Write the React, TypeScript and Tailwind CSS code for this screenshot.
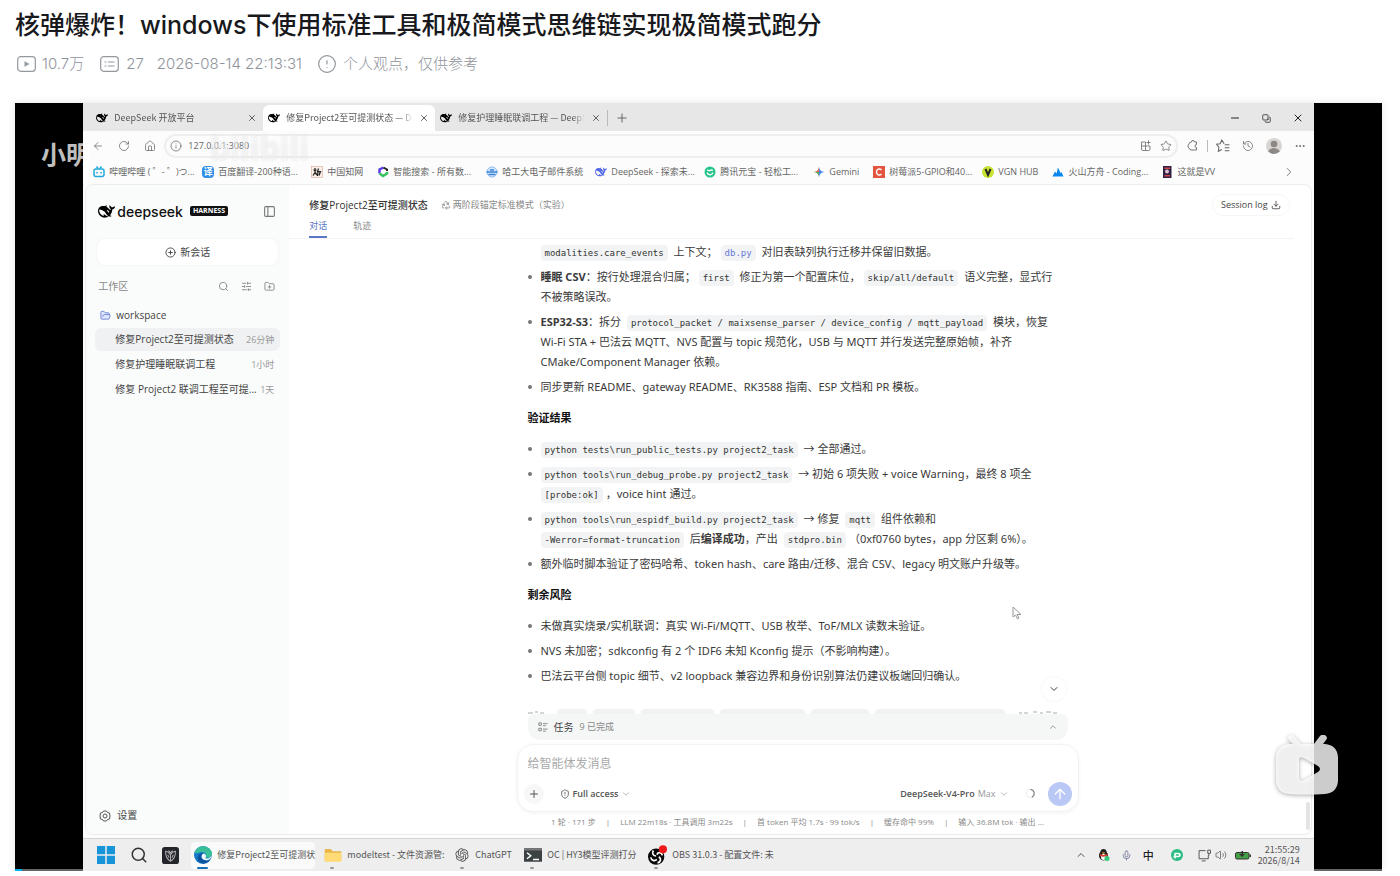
import type { ReactNode } from "react";
import {
  ArrowLeft, ArrowUp, ChevronDown, ChevronRight, ChevronUp, CircleAlert, CirclePlus, Copy, Download, Ellipsis,
  FolderOpen, FolderPlus, History, House, Info, Mic, Minus, PanelLeft, Plus, Recycle,
  RotateCw, Search, ShieldAlert, SlidersHorizontal, Star, Volume2, X,
} from "lucide-react";
import { RiOpenaiFill } from "react-icons/ri";

const Whale = ({ className }: { className: string }) => (
  <svg viewBox="0 0 24 24" fill="currentColor" className={className} aria-hidden="true">
    <path d="M23.748 4.482c-.254-.124-.364.113-.512.234-.051.039-.094.09-.137.136-.372.397-.806.657-1.373.626-.829-.046-1.537.214-2.163.848-.133-.782-.575-1.248-1.247-1.548-.352-.156-.708-.311-.955-.65-.172-.241-.219-.51-.305-.774-.055-.16-.11-.323-.293-.35-.2-.031-.278.136-.356.276-.313.572-.434 1.202-.422 1.84.027 1.436.633 2.58 1.838 3.393.137.093.172.187.129.323-.082.28-.18.552-.266.833-.055.179-.137.217-.329.14a5.526 5.526 0 01-1.736-1.18c-.857-.828-1.631-1.742-2.597-2.458a11.365 11.365 0 00-.689-.471c-.985-.957.13-1.743.388-1.836.27-.098.093-.432-.779-.428-.872.004-1.67.295-2.687.684a3.055 3.055 0 01-.465.137 9.597 9.597 0 00-2.883-.102c-1.885.21-3.39 1.102-4.497 2.623C.082 8.606-.231 10.684.152 12.85c.403 2.284 1.569 4.175 3.36 5.653 1.858 1.533 3.997 2.284 6.438 2.14 1.482-.085 3.133-.284 4.994-1.86.47.234.962.327 1.78.397.63.059 1.236-.03 1.705-.128.735-.156.684-.837.419-.961-2.155-1.004-1.682-.595-2.113-.926 1.096-1.296 2.746-2.642 3.392-7.003.05-.347.007-.565 0-.845-.004-.17.035-.237.23-.256a4.173 4.173 0 001.545-.475c1.396-.763 1.96-2.015 2.093-3.517.02-.23-.004-.467-.247-.588zM11.581 18c-2.089-1.642-3.102-2.183-3.52-2.16-.392.024-.321.471-.235.763.09.288.207.486.371.739.114.167.192.416-.113.603-.673.416-1.842-.14-1.897-.167-1.361-.802-2.5-1.86-3.301-3.307-.774-1.393-1.224-2.887-1.298-4.482-.02-.386.093-.522.477-.592a4.696 4.696 0 011.529-.039c2.132.312 3.946 1.265 5.468 2.774.868.86 1.525 1.887 2.202 2.891.72 1.066 1.494 2.082 2.48 2.914.348.292.625.514.891.677-.802.09-2.14.11-3.054-.614zm1-6.44a.306.306 0 01.415-.287.302.302 0 01.2.288.306.306 0 01-.31.307.303.303 0 01-.304-.308zm3.11 1.596c-.2.081-.399.151-.59.16a1.245 1.245 0 01-.798-.254c-.274-.23-.47-.358-.552-.758a1.73 1.73 0 01.016-.588c.07-.327-.008-.537-.239-.727-.187-.156-.426-.199-.688-.199a.559.559 0 01-.254-.078c-.11-.054-.2-.19-.114-.358.028-.054.16-.186.192-.21.356-.202.767-.136 1.146.016.352.144.618.408 1.001.782.391.451.462.576.685.914.176.265.336.537.445.848.067.195-.019.354-.25.452z" />
  </svg>
);

const Svg = ({ children, className = "size-3", box = "0 0 24 24" }: { children: ReactNode; className?: string; box?: string }) => (
  <svg viewBox={box} fill="none" className={`shrink-0 ${className}`} aria-hidden="true">{children}</svg>
);

const bookmarks: { label: string; wide?: boolean; icon: ReactNode }[] = [
  { label: "哔哩哔哩 ( ゜- ゜)つ...", wide: true, icon: <Svg><rect x="2" y="6" width="20" height="15" rx="4" stroke="#22a9dc" strokeWidth="3" /><path d="m7 1 3 4m7-4-3 4M8 12v3m8-3v3" stroke="#22a9dc" strokeWidth="3" /></Svg> },
  { label: "百度翻译-200种语...", wide: true, icon: <span className="flex size-3 shrink-0 items-center justify-center rounded-sm bg-[#2d8fe6] text-[9px] font-bold text-white">译</span> },
  { label: "中国知网", icon: <Svg><rect x="1" y="1" width="22" height="22" fill="#fbeee7" stroke="#cf9a83" /><path d="M5 8h6M8 4v9l-4 6m4-6 4 5m3-13-2 6h6l-3 8m-2-8-1 9" stroke="#222" strokeWidth="2.500" /></Svg> },
  { label: "智能搜索 - 所有数...", wide: true, icon: <Svg><path d="M13 3 5 7v8" stroke="#5b3df0" strokeWidth="5" /><path d="m13 3 7 4v3" stroke="#222" strokeWidth="4" /><path d="m5 15 7 5 8-5v-3" stroke="#39c262" strokeWidth="5" /></Svg> },
  { label: "哈工大电子邮件系统", wide: true, icon: <Svg><circle cx="12" cy="12" r="10" fill="#d6e8fb" stroke="#8dbbee" strokeWidth="2" /><path d="M1 12h22M5 17h14M8 8h8" stroke="#3f83d8" strokeWidth="3" /></Svg> },
  { label: "DeepSeek - 探索未...", wide: true, icon: <Whale className="size-3 shrink-0 text-[#5468e8]" /> },
  { label: "腾讯元宝 - 轻松工...", wide: true, icon: <Svg><circle cx="12" cy="12" r="11" fill="#24c489" /><path d="M6 9c3-2 4 2 6 0s4-1 6 0M6 13c2 6 10 6 12 0" stroke="#fff" strokeWidth="2.5" /></Svg> },
  { label: "Gemini", icon: <Svg><path d="M12 1c1 7 4 10 11 11-7 1-10 4-11 11Z" fill="#4285e8" /><path d="M12 1C11 8 8 11 1 12h11Z" fill="#e66c50" /><path d="M1 12c7 1 10 4 11 11V12Z" fill="#5aaa65" /></Svg> },
  { label: "树莓派5-GPIO和40...", wide: true, icon: <Svg><path fill="#e3553f" d="M0 0h24v24H0z" /><path d="M17 8c-4-4-10-2-10 4s6 8 10 4" stroke="#fff" strokeWidth="3" /></Svg> },
  { label: "VGN HUB", icon: <Svg><circle cx="12" cy="12" r="12" fill="#c8e332" /><path d="m7 6 5 12 5-12" stroke="#222" strokeWidth="4" /></Svg> },
  { label: "火山方舟 - Coding...", wide: true, icon: <Svg><path d="m1 21 5-10 3 4 3-12 5 11 2-2 4 9Z" fill="#0a88ef" /></Svg> },
  { label: "这就是VV", icon: <Svg><path fill="#302043" d="M4 0h17v24H4z" /><path fill="#d1474e" d="M7 3h11v3H7zM7 18h11v3H7z" /><circle cx="12" cy="11" r="4" fill="#dfc1cc" /></Svg> },
];

const Tab = ({ title, active }: { title: string; active?: boolean }) => (
  <div className={`flex h-full w-[172px] items-center gap-[6px] rounded-t-md pr-[6px] pl-[5px] ${active ? "bg-white" : ""}`}>
    <Whale className="size-3 shrink-0 text-black" />
    <span className="min-w-0 flex-1 overflow-hidden mask-r-from-90% font-['Noto_Sans_CJK_SC',sans-serif] text-[9px] whitespace-nowrap text-[#555]">{title}</span>
    <button aria-label="关闭标签页"><X className="size-[10px] text-[#444]" strokeWidth={2} /></button>
  </div>
);

const Code = ({ children, link }: { children: string; link?: boolean }) => (
  <code className={`mx-[3px] inline-block rounded bg-[#f2f3f4] px-1 font-['DejaVu_Sans_Mono','Liberation_Mono',monospace] text-[9px] leading-4 first:ml-0 ${link ? "text-[#6478d8]" : "text-[#333]"}`}>{children}</code>
);

const Item = ({ children, plain }: { children: ReactNode; plain?: boolean }) => (
  <li className="flex items-start gap-2">
    <span className="flex h-5 w-[5px] shrink-0 items-center justify-center">
      {!plain && <span className="size-1 rounded-full bg-[#777]" />}
    </span>
    <div>{children}</div>
  </li>
);

const Line = ({ children }: { children: ReactNode }) => <p className="h-5 whitespace-nowrap">{children}</p>;
const Heading = ({ children }: { children: string }) => <h3 className="my-[11px] font-bold text-[#111]">{children}</h3>;

const sessions = [
  { title: "修复Project2至可提测状态", time: "26分钟", active: true },
  { title: "修复护理睡眠联调工程", time: "1小时" },
  { title: "修复 Project2 联调工程至可提...", time: "1天" },
];

function Sidebar() {
  return (
    <aside className="flex w-[203px] shrink-0 flex-col bg-[#fafbfb] px-[9px] text-[10px] text-[#444]">
      <div className="mt-[17px] flex h-[18px] items-center pl-[3px]">
        <Whale className="size-[17px] text-black" />
        <span className="ml-[2px] font-['Inter',sans-serif] text-[14px] font-medium text-[#111]">deepseek</span>
        <span className="ml-[7px] rounded-xs bg-[#111] px-[3px] text-[7px] leading-[10px] font-bold text-white">HARNESS</span>
        <button aria-label="收起侧栏" className="mr-1 ml-auto"><PanelLeft className="size-[13px] text-[#777]" /></button>
      </div>
      <button className="mx-[2px] mt-[19px] flex h-[26px] items-center justify-center gap-1 rounded-lg bg-white shadow-[0_0_2px_#e8e8e8]">
        <CirclePlus className="size-[11px]" />新会话
      </button>
      <div className="mt-[11px] flex h-5 items-center gap-3 px-[3px] text-[#888]">
        <span className="mr-auto">工作区</span>
        <button aria-label="搜索"><Search className="size-[11px]" /></button>
        <button aria-label="筛选"><SlidersHorizontal className="size-[11px]" /></button>
        <button aria-label="新建文件夹" className="mr-[2px]"><FolderPlus className="size-[11px]" /></button>
      </div>
      <div className="mt-[7px] flex h-6 items-center gap-[5px] px-[5px]">
        <FolderOpen className="size-[11px] fill-[#dfe7ff] text-[#6c82d2]" />workspace
      </div>
      <ul className="mt-[1px] flex flex-col gap-[2px]">
        {sessions.map((s) => (
          <li key={s.title} className={`flex h-[23px] items-center justify-between rounded-md pr-[6px] pl-5 whitespace-nowrap ${s.active ? "bg-[#eff1f2]" : ""}`}>
            <span>{s.title}</span>
            <span className="text-[9px] text-[#999]">{s.time}</span>
          </li>
        ))}
      </ul>
      <button className="mt-auto mb-[11px] flex items-center gap-[6px] px-1">
        <Svg className="size-3"><path d="m9 2 6 0 2 3 4 1 1 6-1 6-4 1-2 3H9l-2-3-4-1-1-6 1-6 4-1Z" stroke="#555" strokeWidth="2" /><circle cx="12" cy="12" r="4" stroke="#555" strokeWidth="2" /></Svg>
        设置
      </button>
    </aside>
  );
}

function Messages() {
  return (
    <div className="mx-auto w-[540px] pt-[3px] font-['Noto_Sans','Noto_Sans_CJK_SC',sans-serif] text-[11px] leading-5 text-[#3a3a3a]">
      <ul className="flex flex-col gap-[5px]">
        <Item plain>
          <Line><Code>modalities.care_events</Code> 上下文；<Code link>db.py</Code> 对旧表缺列执行迁移并保留旧数据。</Line>
        </Item>
        <Item>
          <Line><b>睡眠 CSV</b>：按行处理混合归属；<Code>first</Code> 修正为第一个配置床位，<Code>skip/all/default</Code> 语义完整，显式行</Line>
          <Line>不被策略误改。</Line>
        </Item>
        <Item>
          <Line><b>ESP32-S3</b>：拆分 <Code>protocol_packet / maixsense_parser / device_config / mqtt_payload</Code> 模块，恢复</Line>
          <Line>Wi-Fi STA + 巴法云 MQTT、NVS 配置与 topic 规范化，USB 与 MQTT 并行发送完整原始帧，补齐</Line>
          <Line>CMake/Component Manager 依赖。</Line>
        </Item>
        <Item><Line>同步更新 README、gateway README、RK3588 指南、ESP 文档和 PR 模板。</Line></Item>
      </ul>
      <Heading>验证结果</Heading>
      <ul className="flex flex-col gap-[5px]">
        <Item><Line><Code>python tests\run_public_tests.py project2_task</Code> → 全部通过。</Line></Item>
        <Item>
          <Line><Code>python tools\run_debug_probe.py project2_task</Code> → 初始 6 项失败 + voice Warning，最终 8 项全</Line>
          <Line><Code>[probe:ok]</Code>，voice hint 通过。</Line>
        </Item>
        <Item>
          <Line><Code>python tools\run_espidf_build.py project2_task</Code> → 修复 <Code>mqtt</Code> 组件依赖和</Line>
          <Line><Code>-Werror=format-truncation</Code> 后<b>编译成功</b>，产出 <Code>stdpro.bin</Code>（0xf0760 bytes，app 分区剩 6%）。</Line>
        </Item>
        <Item><Line>额外临时脚本验证了密码哈希、token hash、care 路由/迁移、混合 CSV、legacy 明文账户升级等。</Line></Item>
      </ul>
      <Heading>剩余风险</Heading>
      <ul className="flex flex-col gap-[5px]">
        <Item><Line>未做真实烧录/实机联调：真实 Wi-Fi/MQTT、USB 枚举、ToF/MLX 读数未验证。</Line></Item>
        <Item><Line>NVS 未加密；sdkconfig 有 2 个 IDF6 未知 Kconfig 提示（不影响构建）。</Line></Item>
        <Item><Line>巴法云平台侧 topic 细节、v2 loopback 兼容边界和身份识别算法仍建议板端回归确认。</Line></Item>
      </ul>
      {/* next message, scrolled under the task bar */}
      <div className="mt-[23px] flex h-[5px] gap-[6px] overflow-hidden">
        <Svg className="h-[5px] w-[23px]" box="0 0 23 5"><path d="M0 4h5M7 3h3M12 4h4" stroke="#aaa" /></Svg>
        <span className="w-[30px] rounded-t bg-[#f1f2f2]" />
        <span className="w-[42px] rounded-t bg-[#f1f2f2]" />
        <span className="w-[73px] rounded-t bg-[#f1f2f2]" />
        <span className="w-[85px] rounded-t bg-[#f1f2f2]" />
        <span className="w-[58px] rounded-t bg-[#f1f2f2]" />
        <span className="w-[130px] rounded-t bg-[#f1f2f2]" />
        <Svg className="ml-2 h-[5px] w-[40px]" box="0 0 40 5"><path d="M0 4h3M5 4h4M14 3h4M21 4h3M27 3h5M34 4h4" stroke="#aaa" /></Svg>
      </div>
    </div>
  );
}

function Composer() {
  return (
    <>
      <button className="mx-auto flex h-[26px] w-[540px] items-center gap-[6px] rounded-t-md rounded-b-xl bg-[#f5f6f6] px-[10px] text-[10px] text-[#444]">
        <Svg className="size-[10px]"><path d="M2 2h6v6H2zM2 15h6v6H2zM12 4h11M12 9h7M12 17h11M12 22h7" stroke="#777" strokeWidth="2" /></Svg>
        任务 <span className="text-[9px] text-[#888]">9 已完成</span>
        <ChevronUp className="ml-auto size-[10px] text-[#888]" />
      </button>
      <form className="mx-auto mt-1 w-[562px] rounded-2xl border border-[#f3f3f3] bg-white px-[10px] pt-2 shadow-[0_1px_4px_#0000000d]" onSubmit={(e) => e.preventDefault()}>
        <input aria-label="消息" placeholder="给智能体发消息" className="block h-5 w-full text-[12px] outline-none placeholder:text-[#aaa]" />
        <div className="mt-[7px] mb-1 flex h-[27px] items-center text-[10px] text-[#555]">
          <button type="button" aria-label="添加" className="-ml-1 flex size-5 items-center justify-center rounded-full bg-[#f7f7f7]"><Plus className="size-3" /></button>
          <button type="button" className="ml-4 flex items-center gap-[3px] text-[9px] font-semibold"><ShieldAlert className="size-[10px]" />Full access <ChevronDown className="size-[10px] text-[#aaa]" /></button>
          <button type="button" className="ml-auto flex items-center gap-[3px] text-[9px] font-semibold">DeepSeek-V4-Pro <span className="font-normal text-[#999]">Max</span><ChevronDown className="size-[10px] text-[#aaa]" /></button>
          <Svg className="ml-4 size-[11px]"><circle cx="12" cy="12" r="9" stroke="#e6e6e6" strokeWidth="2" /><path d="M12 3a9 9 0 0 1 3 17" stroke="#888" strokeWidth="2.5" /></Svg>
          <button aria-label="发送" className="mr-[-4px] ml-3 flex size-6 items-center justify-center rounded-full bg-[#bac8f5]"><ArrowUp className="size-4 text-white" /></button>
        </div>
      </form>
      <div className="mx-auto mt-[3px] flex h-[14px] w-[540px] items-center justify-center gap-[10px] text-[8px] whitespace-nowrap text-[#888]">
        <span>1 轮 · 171 步</span><span>|</span>
        <span>LLM 22m18s · 工具调用 3m22s</span><span>|</span>
        <span>首 token 平均 1.7s · 99 tok/s</span><span>|</span>
        <span>缓存命中 99%</span><span>|</span>
        <span>输入 36.8M tok · 输出 ...</span>
      </div>
    </>
  );
}

function BrowserChrome() {
  return (
    <>
      <div className="flex h-7 items-center bg-[#e7e7e7] pt-[2px] pl-2">
        <Tab title="DeepSeek 开放平台" />
        <Tab title="修复Project2至可提测状态 — Dee" active />
        <Tab title="修复护理睡眠联调工程 — DeepSe" />
        <span className="h-4 w-px bg-[#bbb]" />
        <button aria-label="新建标签页" className="ml-[7px]"><Plus className="size-[14px] text-[#555]" strokeWidth={1.5} /></button>
        <div className="mr-[10px] ml-auto flex items-center gap-[21px] text-[#222]">
          <button aria-label="最小化"><Minus className="size-3" /></button>
          <button aria-label="还原"><Copy className="size-[9px] -scale-x-100 rotate-90" /></button>
          <button aria-label="关闭"><X className="size-3" /></button>
        </div>
      </div>
      <div className="flex h-7 items-center pt-[2px] pr-2 pl-[9px] text-[#666]">
        <button aria-label="后退"><ArrowLeft className="size-3" strokeWidth={1.5} /></button>
        <button aria-label="刷新" className="ml-[14px]"><RotateCw className="size-3" strokeWidth={1.5} /></button>
        <button aria-label="主页" className="ml-[14px]"><House className="size-3" strokeWidth={1.5} /></button>
        <div className="ml-2 flex h-6 flex-1 items-center gap-[6px] rounded-full border-2 border-[#eeeeee] pr-1 pl-1">
          <Info className="size-3" strokeWidth={1.5} />
          <input aria-label="地址" defaultValue="127.0.0.1:3080" className="min-w-0 flex-1 text-[9px] outline-none" />
          <Svg className="size-3"><path d="M3 4h8v17H6q-3 0-3-3ZM3 12h17v6q0 3-3 3h-6M17 1v8M13 5h8" stroke="#777" strokeWidth="1.8" /></Svg>
          <Star className="ml-[2px] size-3" strokeWidth={1.5} />
        </div>
        <button aria-label="扩展" className="ml-[9px]"><Svg><path d="M9 4a3 3 0 0 1 6 0h4v5a3 3 0 0 0 0 6v5H9q-4 0-5-4a5 5 0 0 1 0-8q1-4 5-4Z" stroke="#666" strokeWidth="1.8" /></Svg></button>
        <span className="mx-2 h-3 w-px bg-[#bbb]" />
        <button aria-label="收藏夹"><Svg className="size-[14px]"><path d="m14 8-4-6-3 6-6 1 4 5-1 7 6-3M15 10h8M15 15h8M15 20h8" stroke="#666" strokeWidth="1.8" /></Svg></button>
        <button aria-label="历史记录" className="ml-3"><History className="size-3" strokeWidth={1.5} /></button>
        <button aria-label="账户" className="ml-3"><Svg className="size-4"><circle cx="12" cy="12" r="12" fill="#d8d5d3" /><circle cx="12" cy="9" r="5" fill="#8b8885" /><path d="M3 20q9-10 18 0-9 8-18 0Z" fill="#8b8885" /></Svg></button>
        <button aria-label="更多" className="ml-3"><Ellipsis className="size-3" /></button>
      </div>
      <div className="flex h-[25px] items-center gap-[14px] pl-[10px] text-[9px] text-[#666]">
        {bookmarks.map((b) => (
          <a key={b.label} href="#" className={`flex items-center gap-1 whitespace-nowrap ${b.wide ? "w-[95px]" : ""}`}>{b.icon}{b.label}</a>
        ))}
        <button aria-label="更多书签" className="mr-[18px] ml-auto"><ChevronRight className="size-[14px]" strokeWidth={1.5} /></button>
      </div>
    </>
  );
}

const Task = ({ icon, label, width, active }: { icon: ReactNode; label: string; width: string; active?: boolean }) => (
  <button className={`relative flex h-[27px] items-center gap-[5px] rounded pl-[3px] whitespace-nowrap ${width} ${active ? "bg-white/70" : ""}`}>
    {icon}
    {label}
    <span className={`absolute bottom-0 h-[2px] rounded-full ${active ? "left-[6px] w-[11px] bg-[#1670b8]" : "left-[9px] w-1 bg-[#999]"}`} />
  </button>
);

function Taskbar() {
  return (
    <div className="flex h-[33px] items-center border-t border-[#d4d4d4] bg-[#eeeeee] px-[14px] font-['Noto_Sans_CJK_SC',sans-serif] text-[9px] text-[#555]">
      <button aria-label="开始"><Svg className="size-[18px]"><path d="M0 0h11v11H0zM13 0h11v11H13zM0 13h11v11H0zM13 13h11v11H13z" fill="#1894d8" /></Svg></button>
      <button aria-label="搜索" className="ml-[15px]"><Search className="size-[18px] text-[#333]" /></button>
      <button aria-label="应用" className="mr-3 ml-[14px]"><Svg className="size-[17px]"><rect width="24" height="24" rx="4" fill="#22262b" /><path d="M5 6c0 6 1 11 7 14 6-3 7-8 7-14-3 0-5 2-7 5-2-3-4-5-7-5Zm4-1 3 3 3-3M12 11v8M8 11l2 4m6-4-2 4" stroke="#aaa" strokeWidth="1.5" /></Svg></button>
      <Task
        active label="修复Project2至可提测状" width="w-[124px]"
        icon={<Svg className="size-[18px]"><circle cx="12" cy="12" r="12" fill="#1678c9" /><path d="M1 9C4-3 21-2 24 9c1 6-5 8-9 6 3-3 0-7-4-7-5 0-7 3-10 1Z" fill="#38bf9a" /><path d="M10 12c-2 5 3 9 11 7-7 8-17 4-16-4 1-5 6-6 8-5Z" fill="#0b529d" /><path d="M12 10c4 0 5 4 3 6 3 2 7 0 9-4-1 5-4 7-8 7-5 0-8-5-4-9Z" fill="#eef7fb" /></Svg>}
      />
      <Task
        label="modeltest - 文件资源管:" width="ml-[6px] w-[118px]"
        icon={<Svg className="size-[18px]"><path d="M1 4h8l3 3h11v13H1Z" fill="#e8b84e" /><path d="M1 9h22v12H1Z" fill="#ffda75" /></Svg>}
      />
      <Task label="ChatGPT" width="ml-3 w-[64px]" icon={<RiOpenaiFill className="size-4 shrink-0 text-[#555]" />} />
      <Task
        label="OC | HY3模型评测打分" width="ml-[6px] w-[118px]"
        icon={<Svg className="size-[18px]"><path d="M0 3h24v18H0z" fill="#3c4144" /><path d="M0 3h24v3H0z" fill="#777" /><path d="m4 9 5 4-5 4M12 18h8" stroke="#fff" strokeWidth="2" /></Svg>}
      />
      <Task
        label="OBS 31.0.3 - 配置文件: 未" width="ml-[6px] w-[118px]"
        icon={
          <Svg className="h-5 w-[19px]" box="0 0 28 29">
            <circle cx="12" cy="17" r="12" fill="#080808" />
            <path d="M8 8c-3 4 0 8 4 8M21 15c-1-5-6-5-8-1M14 26c5-1 6-6 2-9M4 18c1 5 6 6 9 3" stroke="#fff" strokeWidth="2.500" />
            <circle cx="22" cy="6" r="6" fill="#f01818" />
          </Svg>
        }
      />
      <div className="ml-auto flex items-center gap-[11px]">
        <ChevronUp className="size-3" />
        <Svg className="size-3"><ellipse cx="11" cy="13" rx="9" ry="10" fill="#222" /><circle cx="11" cy="6" r="6" fill="#222" /><ellipse cx="11" cy="16" rx="5" ry="6" fill="#fff" /><path d="M4 10q7 4 15 0v4q-8 3-15 0Z" fill="#e33b30" /><path d="M7 7h8l-4 3Z" fill="#eeb32c" /><circle cx="18" cy="19" r="5" fill="#31cf7b" /></Svg>
        <Mic className="size-[11px] text-[#7b7f9f]" />
        <span className="text-[11px] font-medium text-[#222]">中</span>
        <Svg className="ml-[6px] size-3"><circle cx="12" cy="12" r="12" fill="#29bd83" /><path d="M8 19V9h6q4 0 4 3t-4 3H5" stroke="#fff" strokeWidth="3" /></Svg>
        <div className="ml-1 flex items-center gap-1">
          <Svg className="size-[13px]"><path d="M14 3H2v15h17v-6M7 22h7M18 2h5v6h-5zM20 8v5" stroke="#555" strokeWidth="1.8" /></Svg>
          <Volume2 className="size-3" strokeWidth={1.5} />
          <Svg className="ml-1 h-[9px] w-4" box="0 0 32 18"><rect x="1" y="3" width="27" height="13" rx="3" fill="#43a047" stroke="#333" strokeWidth="2" /><path d="M29 7h3v5h-3zM13 0h3v6h4l-6 6-6-6h5Z" fill="#333" /></Svg>
        </div>
        <div className="-ml-1 text-right leading-[11px]"><div>21:55:29</div><div>2026/8/14</div></div>
      </div>
    </div>
  );
}

export default function App() {
  return (
    <div className="bg-white pt-2 pr-[18px] pl-[15px] font-['Open_Sans','Noto_Sans_CJK_SC',sans-serif]">
      <h1 className="font-['Inter','Noto_Sans_CJK_SC',sans-serif] text-[25px] leading-[34px] font-medium text-[#18191c]">核弹爆炸！windows下使用标准工具和极简模式思维链实现极简模式跑分</h1>
      <div className="mt-[10px] flex h-6 items-center font-['Inter','Noto_Sans_CJK_SC',sans-serif] text-[15px] font-light text-[#8f949b]">
        <Svg className="mx-[2px] h-4 w-[19px]" box="0 0 19 16"><rect x="0.7" y="0.7" width="17.6" height="14.6" rx="3" stroke="#9499a0" strokeWidth="1.2" /><path d="M7.5 5.2v5.6L12.5 8Z" fill="#9499a0" /></Svg>
        <span className="ml-1">10.7万</span>
        <Svg className="ml-4 h-4 w-[19px]" box="0 0 19 16"><rect x="0.7" y="0.7" width="17.6" height="14.6" rx="3" stroke="#9499a0" strokeWidth="1.2" /><path d="M4.5 6h2M8 6h6.500M4.500 10h2M8 10h6.500" stroke="#9499a0" strokeWidth="1.2" /></Svg>
        <span className="ml-[7px]">27</span>
        <span className="ml-[13px]">2026-08-14 22:13:31</span>
        <CircleAlert className="ml-[15px] size-5" strokeWidth={1.4} />
        <span className="ml-[6px]">个人观点，仅供参考</span>
      </div>
      <div className="relative mt-[27px] bg-black shadow-[0_0_8px_#0000001a]">
        <div className="mx-[5%] bg-[#fcfcfc]">
          <BrowserChrome />
          <div className="mx-[2px] mb-[3px] flex overflow-hidden rounded-lg border border-[#ececec] bg-white">
            <Sidebar />
            <main className="relative min-w-0 flex-1 pr-[5px] pb-[5px]">
              <header className="mr-3 flex h-[54px] flex-col border-b border-[#f3f3f3] pl-5">
                <div className="mt-[10px] flex h-5 items-center text-[10px]">
                  <h2 className="font-medium text-[#333]">修复Project2至可提测状态</h2>
                  <Recycle className="ml-[13px] size-[10px] text-[#888]" />
                  <span className="ml-[2px] text-[9px] text-[#888]">两阶段锚定标准模式（实验）</span>
                  <button className="mr-1 ml-auto flex h-[22px] items-center gap-[3px] rounded-full border border-[#f6f6f6] px-2 text-[9px] text-[#444]">Session log <Download className="size-[10px]" /></button>
                </div>
                <nav className="mt-auto flex gap-[26px] text-[9px] text-[#888]">
                  <a href="#" className="h-[19px] border-b-2 border-[#5b76c4] text-[#5b76c4]">对话</a>
                  <a href="#" className="h-[19px]">轨迹</a>
                </nav>
              </header>
              <Messages />
              <Composer />
              <button aria-label="滚动到底部" className="absolute top-[492px] left-[calc(50%+242px)] flex size-6 items-center justify-center rounded-full bg-white shadow-[0_0_3px_#00000010]"><ChevronDown className="size-3 text-[#444]" /></button>
              <svg viewBox="0 0 10 14" className="absolute top-[421px] left-[calc(50%+212px)] h-[14px] w-[10px]" aria-hidden="true"><path d="M1 1v10l2.500-2 2 4 1.500-1-2-3.500h4Z" fill="#fff" stroke="#999" /></svg>
              <span className="absolute right-[1px] bottom-1 h-7 w-1 rounded bg-[#e4e4e4]" />
            </main>
          </div>
          <Taskbar />
        </div>
        {/* player overlays */}
        <span className="pointer-events-none absolute top-8 left-[26px] font-['Noto_Sans_CJK_SC',sans-serif] text-[25px] font-bold whitespace-nowrap text-white/75">小明</span>
        <span className="pointer-events-none absolute top-[29px] left-[195px] text-[32px] leading-8 font-bold text-white/50 [text-shadow:0_0_3px_#0000001a]">bilibili</span>
        <svg viewBox="0 0 64 62" className="pointer-events-none absolute right-[43px] bottom-[74px] h-[62px] w-16 drop-shadow-[0_1px_2px_#00000066]" aria-hidden="true">
          <path fillRule="evenodd" fill="#fff" fillOpacity=".8" d="M14 1q3-2 5 0l7 8h13l6-8q3-3 6 0 2 2 0 4l-3 4h2q12 1 13 13v24q-1 12-13 13-18 1-36 0Q2 58 1 46V22Q2 10 14 9h4l-4-4q-2-2 0-4ZM24 24v19q1 4 5 2l14-8q4-3 0-6l-14-8q-4-2-5 1Z" />
        </svg>
        <span className="absolute bottom-0 left-0 h-[2px] w-[5%] bg-[#666]" />
        <span className="absolute right-0 bottom-0 h-[2px] w-[5%] bg-[#666]" />
        <span className="absolute bottom-0 left-0 h-[2px] w-[7px] bg-[#00aeec]" />
      </div>
    </div>
  );
}
